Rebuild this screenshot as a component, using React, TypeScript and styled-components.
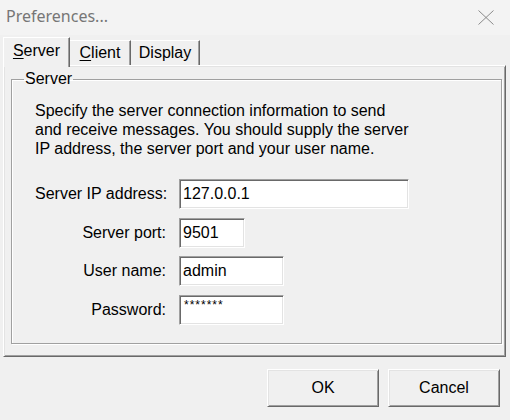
import React from "react";
import styled, { createGlobalStyle } from "styled-components";

const Global = createGlobalStyle`
  html, body { margin: 0; padding: 0; background: #f0f0f0; }
  body { width: 510px; height: 420px; overflow: hidden; }
  * { box-sizing: border-box; }
`;

const Window = styled.div`
  width: 510px;
  height: 420px;
  display: flex;
  flex-direction: column;
  background: #f0f0f0;
  font-family: "Liberation Sans", Arial, sans-serif;
  font-size: 16px;
  color: #000;
`;

const TitleBar = styled.div`
  height: 35px;
  flex: none;
  display: flex;
  align-items: center;
  justify-content: space-between;
  padding: 0 16px 3px 6px;
  background: #f3f3f3;
`;

const Title = styled.span`
  font-family: "Noto Sans", "Open Sans", sans-serif;
  font-size: 16px;
  color: #767676;
`;

const CloseIcon = styled.svg`
  width: 16px;
  height: 15px;
  margin-top: 3px;
`;

const TabsArea = styled.div`
  padding: 2px 4px 0 3px;
  display: flex;
  flex-direction: column;
`;

const TabStrip = styled.div`
  height: 28px;
  display: flex;
  align-items: flex-end;
  position: relative;
  z-index: 1;
`;

const Tab = styled.div<{ $active?: boolean; $w: number }>`
  width: ${(p) => p.$w}px;
  height: ${(p) => (p.$active ? 30 : 25)}px;
  margin-bottom: ${(p) => (p.$active ? -2 : 0)}px;
  display: flex;
  align-items: ${(p) => (p.$active ? "flex-start" : "center")};
  justify-content: center;
  padding-top: ${(p) => (p.$active ? 4 : 0)}px;
  background: #f0f0f0;
  border-top: 1px solid #fff;
  border-left: ${(p) => (p.$active ? "1px solid #fff" : "none")};
  border-right: 1px solid #696969;
  box-shadow: inset -1px 0 0 #a0a0a0;
  line-height: 18px;
  u { text-decoration-thickness: 1px; text-underline-offset: 2px; }
`;

const Panel = styled.div`
  height: 292px;
  display: flex;
  flex-direction: column;
  padding: 5px 3px 12px 7px;
  border-top: 1px solid #fff;
  border-left: 1px solid #fff;
  border-right: 1px solid #696969;
  border-bottom: 1px solid #696969;
  box-shadow: inset 1px 1px 0 #e3e3e3, inset -1px -1px 0 #a0a0a0;
`;

const Group = styled.fieldset`
  flex: 1;
  margin: 0;
  padding: 14px 20px 0 23px;
  border: 1px solid #a0a0a0;
  box-shadow: inset 1px 1px 0 #fff, 1px 1px 0 #fff;
  min-width: 0;
`;

const Legend = styled.legend`
  padding: 0 1px;
  margin-left: -11px;
  line-height: 16px;
  font-size: 16px;
`;

const Description = styled.p`
  margin: 0;
  line-height: 19px;
  white-space: nowrap;
`;

const Form = styled.div`
  margin-top: 21px;
  display: grid;
  grid-template-columns: 131px auto;
  column-gap: 13px;
  row-gap: 8.7px;
  align-items: center;
`;

const Label = styled.span`
  text-align: right;
  white-space: nowrap;
`;

const Field = styled.div<{ $w: number; $small?: boolean }>`
  width: ${(p) => p.$w}px;
  height: 30px;
  background: #fff;
  border-top: 1px solid #a0a0a0;
  border-left: 1px solid #a0a0a0;
  border-right: 1px solid #fff;
  border-bottom: 1px solid #fff;
  box-shadow: inset 1px 1px 0 #696969, inset -1px -1px 0 #e3e3e3;
  padding: ${(p) => (p.$small ? "4px 0 0 4px" : "0 0 0 3px")};
  display: flex;
  align-items: ${(p) => (p.$small ? "flex-start" : "center")};
  font-size: ${(p) => (p.$small ? 12 : 16)}px;
  letter-spacing: ${(p) => (p.$small ? "1px" : "0")};
  line-height: ${(p) => (p.$small ? 11 : 18)}px;
  white-space: nowrap;
`;

const Footer = styled.div`
  display: flex;
  justify-content: flex-end;
  gap: 9px;
  padding: 12px 10px 0 0;
`;

const Button = styled.button`
  width: 112px;
  height: 38px;
  margin: 0;
  padding: 0;
  font-family: "Liberation Sans", Arial, sans-serif;
  font-size: 16px;
  color: #000;
  background: #f0f0f0;
  border-top: 1px solid #fff;
  border-left: 1px solid #fff;
  border-right: 1px solid #696969;
  border-bottom: 1px solid #696969;
  box-shadow: inset 1px 1px 0 #e3e3e3, inset -1px -1px 0 #a0a0a0;
  border-radius: 0;
`;

export default function App() {
  return (
    <>
      <Global />
      <Window>
        <TitleBar>
          <Title>Preferences...</Title>
          <CloseIcon viewBox="0 0 16 15">
            <path d="M0.5 0.5 L15.5 14.5 M15.5 0.5 L0.5 14.5" stroke="#8a8a8a" strokeWidth="1" fill="none" />
          </CloseIcon>
        </TitleBar>
        <TabsArea>
          <TabStrip>
            <Tab $active $w={67}>
              <span>
                <u>S</u>erver
              </span>
            </Tab>
            <Tab $w={61}>
              <span>
                <u>C</u>lient
              </span>
            </Tab>
            <Tab $w={69}>Display</Tab>
          </TabStrip>
          <Panel>
            <Group>
              <Legend>Server</Legend>
              <Description>
                Specify the server connection information to send
                <br />
                and receive messages. You should supply the server
                <br />
                IP address, the server port and your user name.
              </Description>
              <Form>
                <Label>Server IP address:</Label>
                <Field $w={230}>127.0.0.1</Field>
                <Label>Server port:</Label>
                <Field $w={66}>9501</Field>
                <Label>User name:</Label>
                <Field $w={105}>admin</Field>
                <Label>Password:</Label>
                <Field $w={105} $small>
                  *******
                </Field>
              </Form>
            </Group>
          </Panel>
        </TabsArea>
        <Footer>
          <Button>OK</Button>
          <Button>Cancel</Button>
        </Footer>
      </Window>
    </>
  );
}
